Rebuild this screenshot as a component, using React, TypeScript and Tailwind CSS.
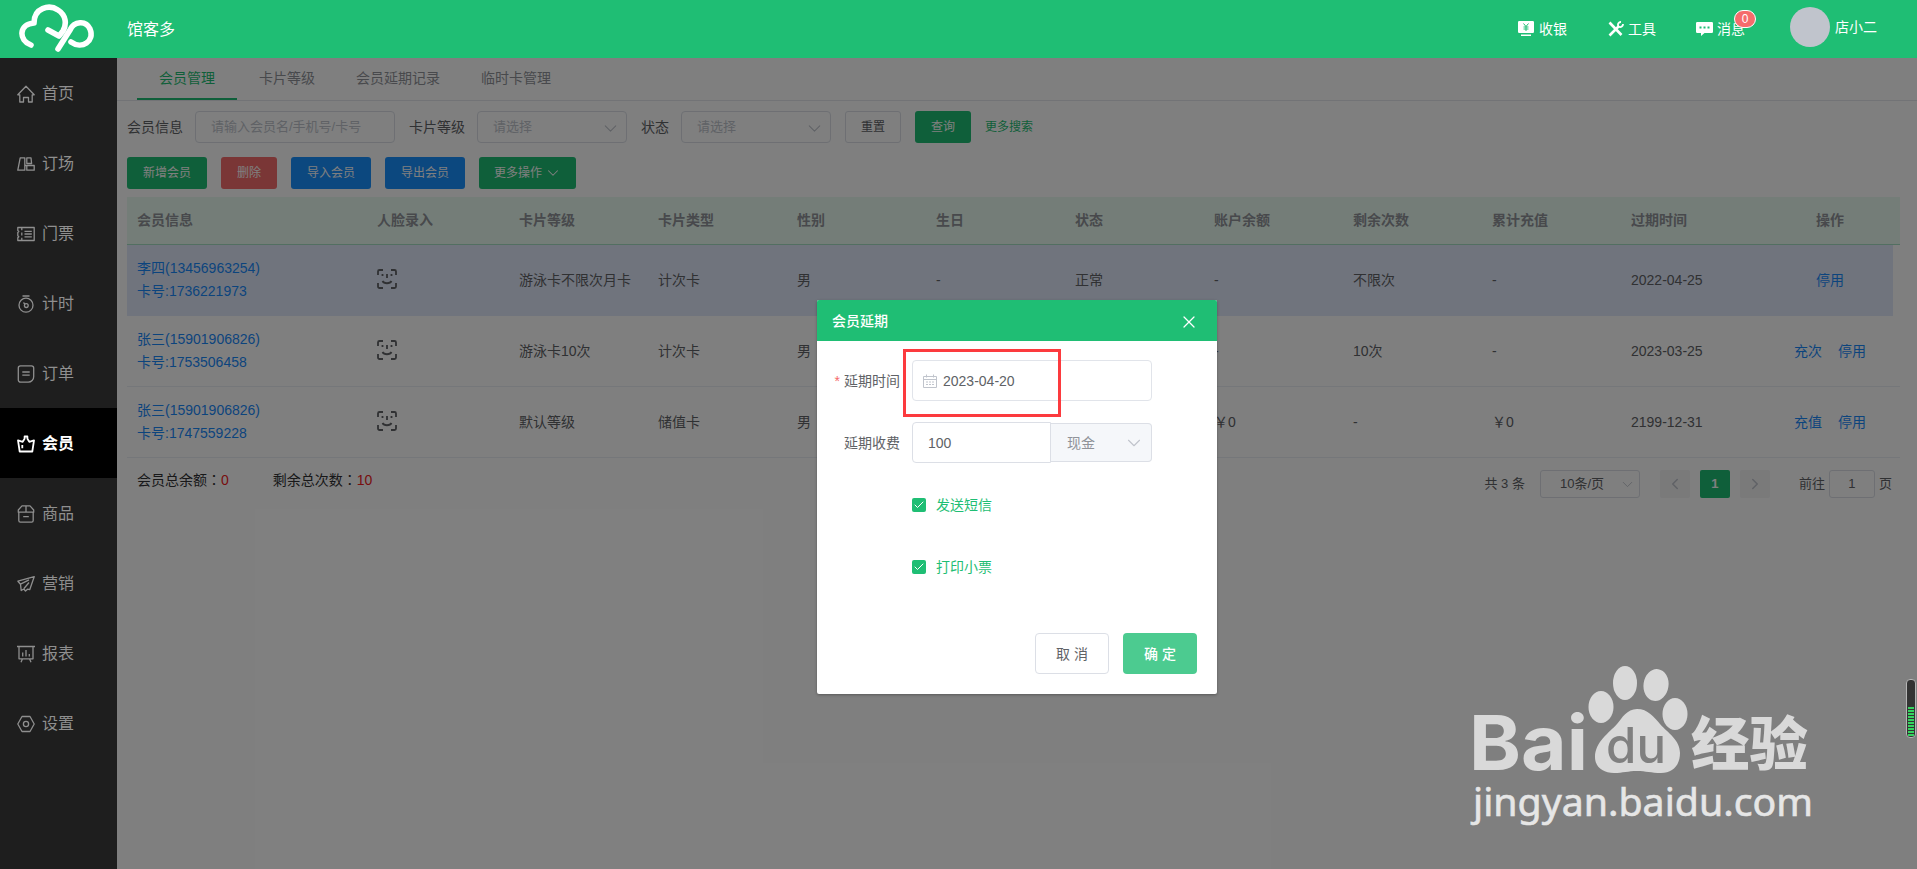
import React from 'react';
import { ChevronDown, ChevronLeft, ChevronRight, X, Check } from 'lucide-react';

interface MenuItem {
  label: string;
  icon: React.ReactNode;
  active?: boolean;
}

interface Member {
  name: string;
  card: string;
  level: string;
  type: string;
  gender: string;
  birthday: string;
  status: string;
  balance: string;
  times: string;
  recharge: string;
  expire: string;
  actions: string[];
}

const menu: MenuItem[] = [
  { label: '首页', icon: <path d="M2.8 9.8H.8L9 1.2l8.2 8.6h-2V17h-3.7v-4.5h-5V17H2.8z" /> },
  { label: '订场', icon: <path d="M3.2 2.8h4.6v12.4H.8zM9.8 2.8H14l.6 5.7H9.8zM9.8 10.5h7.4v4.7H9.8zM7.8 10.5h2" /> },
  { label: '门票', icon: <path d="M.8 2.5h16.4v13H.8v-2.7l1-1-1-1V7.5l1-1-1-1zM4.8 2.5v2.8M4.8 7.5v3M4.8 12.7v2.8M7.5 6.3h7.3M7.5 9h7.3M7.5 11.8h7.3" /> },
  {
    label: '计时',
    icon: (
      <>
        <circle cx="9" cy="10.2" r="7" />
        <circle cx="9.3" cy="10.6" r="1.9" />
        <path d="M5.5 1h7M6.5 7.5 8 9.2" />
      </>
    ),
  },
  { label: '订单', icon: <path d="M3.5.8h11A2.2 2.2 0 0 1 16.7 3v8.500a5.500 5.500 0 0 1-5.500 5.700H3.500A2.200 2.200 0 0 1 1.300 15V3A2.200 2.200 0 0 1 3.500.8zM5.300 7h7.400M5.300 10.200h7.400" /> },
  { label: '会员', active: true, icon: <path d="M1 5.300 5.700 6.800 7.600 3.800V1.500h2.800v2.300l1.900 3L17 5.300l-1.700 11.200H2.700zM5.300 10v3.300" /> },
  { label: '商品', icon: <path d="M5 .9h8L16.700 5v2.200H1.300V5zM1.800 7.200v8.300c0 1 .6 1.600 1.600 1.600h11.200c1 0 1.600-.6 1.600-1.600V7.200M9 .9v6.300M6.200 11.700h5.600" /> },
  { label: '营销', icon: <path d="M17.200 1.700.9 6.200l2.600 3 .7 6.300 2.600-1.500 1.700 2 2-1.800 2.200.5zM3.500 9.200l8.500-4.300M7 13.500l5-6" /> },
  { label: '报表', icon: <path d="M0 1.500h18M2 1.500v12.300h14V1.500M5.500 13.800 4 17.200M12.500 13.800l1.500 3.400M5.700 7.500v4M9 5V11.500M12.300 9v2.500" /> },
  {
    label: '设置',
    icon: (
      <>
        <path d="M5 1.500h8L17.200 9 13 16.500H5L.8 9z" />
        <circle cx="9" cy="9" r="2.600" />
      </>
    ),
  },
];

const tabs = ['会员管理', '卡片等级', '会员延期记录', '临时卡管理'];

const columns = ['会员信息', '人脸录入', '卡片等级', '卡片类型', '性别', '生日', '状态', '账户余额', '剩余次数', '累计充值', '过期时间'];

const members: Member[] = [
  { name: '李四(13456963254)', card: '卡号:1736221973', level: '游泳卡不限次月卡', type: '计次卡', gender: '男', birthday: '-', status: '正常', balance: '-', times: '不限次', recharge: '-', expire: '2022-04-25', actions: ['停用'] },
  { name: '张三(15901906826)', card: '卡号:1753506458', level: '游泳卡10次', type: '计次卡', gender: '男', birthday: '-', status: '正常', balance: '-', times: '10次', recharge: '-', expire: '2023-03-25', actions: ['充次', '停用'] },
  { name: '张三(15901906826)', card: '卡号:1747559228', level: '默认等级', type: '储值卡', gender: '男', birthday: '-', status: '正常', balance: '￥0', times: '-', recharge: '￥0', expire: '2199-12-31', actions: ['充值', '停用'] },
];

const GRID = 'grid grid-cols-[240px_142px_139px_139px_139px_139px_139px_139px_139px_139px_139px_140px]';

const FaceIcon = () => (
  <svg className="mb-[3px] h-[22px] w-[22px]" viewBox="0 0 22 22" fill="none" stroke="currentColor" strokeWidth="1.8">
    <path d="M2 7V3.500A1.500 1.500 0 0 1 3.500 2H7M15 2h3.500A1.500 1.500 0 0 1 20 3.500V7M20 15v3.500a1.500 1.500 0 0 1-1.500 1.500H15M7 20H3.500A1.500 1.500 0 0 1 2 18.500V15" />
    <path d="M6.500 6v2M11 6v4M15.500 6v2M6.500 13c1.500 3 7.500 3 9 0" />
  </svg>
);

const Header = () => (
  <header className="flex h-[58px] shrink-0 items-center bg-[#1fbe74] text-white">
    <svg className="ml-[18px] h-[50px] w-[78px]" viewBox="0 0 78 50" fill="none" stroke="currentColor" strokeWidth="5.6" strokeLinecap="round" strokeLinejoin="round">
      <path d="M13 41C0 36 1 20 16 19C16 4 31 0 40 6C48 11 49 20 45 27L41 32L30 26" />
      <path d="M40 45 52 26C56 17 68 16 72 25C77 37 64 46 53 38" />
    </svg>
    <div className="mt-[2px] ml-[31px] flex-1 text-[16px]">馆客多</div>
    <div className="flex items-center gap-[5px] text-[14px]">
      <svg className="h-4 w-4" viewBox="0 0 16 16">
        <path d="M1.200 0h13.600A1.200 1.200 0 0 1 16 1.200v9.600a1.200 1.200 0 0 1-1.200 1.200H1.200A1.200 1.200 0 0 1 0 10.800V1.200A1.200 1.200 0 0 1 1.200 0zM3 13.500h10v1.500H3z" fill="currentColor" />
        <path d="m5.500 2.500 2.500 3 2.500-3M5.500 6h5M5.500 8h5M8 5.500V10" stroke="#1fbe74" fill="none" />
      </svg>
      收银
    </div>
    <div className="ml-[41px] flex items-center gap-[4px] text-[14px]">
      <svg className="h-4 w-4" viewBox="0 0 16 16" fill="none" stroke="currentColor" strokeWidth="2.6">
        <path d="M1.500 1.500 13.500 14M1.500 14.500l9-9" />
        <path d="M10.500 5.500C9 3 11 .8 13 1M10.500 5.500C13 7 15.200 5 15 3" strokeWidth="1.8" />
      </svg>
      工具
    </div>
    <div className="relative ml-[40px] flex items-center gap-[4px] text-[14px]">
      <svg className="h-4 w-[17px]" viewBox="0 0 17 16" fill="currentColor">
        <path d="M1.200 1h14.600A1.200 1.200 0 0 1 17 2.200v8.600a1.200 1.200 0 0 1-1.200 1.200H8.500L5 15v-3H1.200A1.200 1.200 0 0 1 0 10.800V2.200A1.200 1.200 0 0 1 1.200 1z" />
        <path d="M3.500 5.500h2v2h-2zM7.500 5.500h2v2h-2zM11.500 5.500h2v2h-2z" fill="#1fbe74" />
      </svg>
      消息
      <span className="absolute -top-[9px] left-[38px] flex h-[18px] w-[22px] items-center justify-center rounded-full border border-white bg-[#f56c6c] text-[12px]">0</span>
    </div>
    <div className="mb-1 ml-[45px] h-10 w-10 rounded-full bg-[#c0c4cc]" />
    <div className="mr-[40px] mb-1 ml-[5px] text-[14px]">店小二</div>
  </header>
);

const Sidebar = () => (
  <nav className="w-[117px] shrink-0 bg-[#1e1e1e]">
    {menu.map((item) => (
      <div
        key={item.label}
        className={`flex h-[70px] items-center gap-[7px] pt-[1px] pl-[17px] text-[16px] ${item.active ? 'bg-black font-bold text-white' : 'text-[#8f8f8f]'}`}
      >
        <svg className="h-[18px] w-[18px]" viewBox="0 0 18 18" fill="none" stroke="currentColor" strokeWidth={item.active ? 1.8 : 1.3} strokeLinejoin="round">
          {item.icon}
        </svg>
        <span className="pt-[1px]">{item.label}</span>
      </div>
    ))}
  </nav>
);

const SelectBox = () => (
  <div className="flex h-8 w-[150px] items-center justify-between rounded border border-[#dcdfe6] pr-[5px] pl-[15px] text-[13px] text-[#c0c4cc]">
    请选择
    <ChevronDown size={21} strokeWidth={1.2} className="mt-[3px]" />
  </div>
);

const MemberTable = () => (
  <div className="ml-[10px] w-[1773px] text-[14px]">
    <div className={`${GRID} h-12 items-center border-b border-[#a5dfc2] bg-[#e9fbf1] font-bold text-[#909399]`}>
      {columns.map((column) => (
        <div key={column} className="pl-[10px]">{column}</div>
      ))}
      <div className="text-center">操作</div>
    </div>
    {members.map((member, index) => (
      <div
        key={member.card}
        className={`${GRID} h-[71px] items-center border-b text-[#606266] ${index === 0 ? 'w-[1766px] border-[#e0e9fb] bg-[#e0e9fb]' : 'border-[#ebeef5]'}`}
      >
        <div className="pl-[10px] leading-[23px] text-[#1989fa]">
          <div>{member.name}</div>
          <div>{member.card}</div>
        </div>
        <div className="pl-[9px]"><FaceIcon /></div>
        <div className="pl-[10px] whitespace-nowrap">{member.level}</div>
        <div className="pl-[10px]">{member.type}</div>
        <div className="pl-[10px]">{member.gender}</div>
        <div className="pl-[10px]">{member.birthday}</div>
        <div className="pl-[10px]">{member.status}</div>
        <div className="pl-[10px]">{member.balance}</div>
        <div className="pl-[10px]">{member.times}</div>
        <div className="pl-[10px]">{member.recharge}</div>
        <div className="pl-[10px]">{member.expire}</div>
        <div className="flex justify-center gap-4 text-[#1989fa]">
          {member.actions.map((action) => (
            <span key={action}>{action}</span>
          ))}
        </div>
      </div>
    ))}
  </div>
);

// The Traditional face centres the full-width colon
const Colon = () => <span className="mb-[4px] font-['Noto_Sans_CJK_TC',sans-serif] leading-none">：</span>;

const Checkbox = ({ label }: { label: string }) => (
  <div className="ml-[95px] flex h-[62px] items-center gap-[10px] text-[14px] text-[#1fbe74]">
    <span className="flex h-[14px] w-[14px] items-center justify-center rounded-[2px] bg-[#1fbe74]">
      <Check size={12} strokeWidth={2} className="text-white" />
    </span>
    <span className="pt-[1px]">{label}</span>
  </div>
);

const ExtendDialog = () => (
  <div className="absolute top-[300px] left-[817px] h-[394px] w-[400px] rounded-[2px] bg-white text-[14px] text-[#606266] shadow-[0_1px_3px_rgba(0,0,0,0.3)]">
    <div className="flex h-[41px] items-center justify-between rounded-t-[2px] bg-[#1fbe74] pt-[2px] pr-[18px] pl-[15px] font-medium text-white">
      会员延期
      <X size={20} strokeWidth={1.5} />
    </div>
    <div className="mt-[19px] flex items-center">
      <div className="w-[83px] pt-[2px] text-right">
        <span className="mr-1 text-[#f56c6c]">*</span>延期时间
      </div>
      <div className="ml-3 flex h-[41px] w-[240px] items-center gap-[6px] rounded border border-[#e1e4ea] pt-[1px] pl-[10px]">
        <svg className="h-[14px] w-[14px] text-[#c0c4cc]" viewBox="0 0 14 14" fill="none" stroke="currentColor">
          <path d="M.5 2.500h13v11H.5zM.5 5.500h13M3.500.5v3M10.500.5v3M3 8h2M6 8h2M9 8h2M3 10.500h2M6 10.500h2M9 10.500h2" />
        </svg>
        2023-04-20
      </div>
    </div>
    <div className="mt-[21px] flex items-center">
      <div className="w-[83px] pt-[2px] text-right">延期收费</div>
      <div className="ml-3 flex h-[41px] w-[139px] items-center rounded-l border border-[#dcdfe6] pt-[1px] pl-[15px]">100</div>
      <div className="flex h-[39px] w-[101px] items-center justify-between rounded-r border border-l-0 border-[#dcdfe6] bg-[#f5f7fa] pt-[1px] pr-[6px] pl-[16px] text-[#909399]">
        现金
        <ChevronDown size={22} strokeWidth={1.2} className="text-[#c0c4cc]" />
      </div>
    </div>
    <div className="mt-[11px]">
      <Checkbox label="发送短信" />
      <Checkbox label="打印小票" />
    </div>
    <div className="mt-[35px] flex justify-end gap-[14px] pr-[20px]">
      <button className="h-[41px] w-[74px] rounded border border-[#dcdfe6] pt-[1px]">取 消</button>
      <button className="h-[41px] w-[74px] rounded bg-[#4ccb90] pt-[1px] font-medium text-white">确 定</button>
    </div>
  </div>
);

const Watermark = () => (
  <div className="absolute top-[664px] left-[1470px] h-[166px] w-[350px] text-[#d9d9d9]">
    <svg className="h-full w-full" viewBox="0 0 350 166" fill="currentColor">
      <text x="-1" y="106" fontSize="76" fontFamily="Inter, sans-serif" fontWeight="700" textLength="119" lengthAdjust="spacingAndGlyphs">Bai</text>
      <ellipse cx="131" cy="43" rx="12.5" ry="16" />
      <ellipse cx="155" cy="19" rx="12" ry="17" />
      <ellipse cx="186" cy="21" rx="12.5" ry="16" transform="rotate(8 186 21)" />
      <ellipse cx="205" cy="50" rx="12.5" ry="16" />
      <path d="M167 45c-10 0-15 9-20 15-8 9-22 18-22 33 0 10 8 16 19 16 9 0 14-2 23-2s14 2 24 2c12 0 19-8 19-20 0-13-12-20-20-29-6-7-12-15-23-15z" />
      <text x="136" y="99" fontSize="49" fontFamily="Inter, sans-serif" fontWeight="500" fill="#808080" textLength="60" lengthAdjust="spacingAndGlyphs">du</text>
      <text x="221" y="101" fontSize="58" fontFamily="'Noto Sans CJK SC', sans-serif" fontWeight="900" textLength="117" lengthAdjust="spacingAndGlyphs">经验</text>
      <text x="3" y="152" fontSize="38" fontFamily="'Noto Sans', sans-serif" fill="#e6e6e6" stroke="#e6e6e6" strokeWidth="0.6" textLength="340" lengthAdjust="spacingAndGlyphs">jingyan.baidu.com</text>
    </svg>
  </div>
);

const VolumeMeter = () => (
  <div className="absolute top-[679px] left-[1906px] flex h-[59px] w-[10px] flex-col justify-end gap-px rounded-[4px] border border-[#b5b5b5] bg-[#333] p-px">
    {Array.from({ length: 10 }, (_, index) => (
      <div key={index} className="h-[2px] w-full bg-[#35d45f]" />
    ))}
  </div>
);

const App: React.FC = () => {
  return (
    <div className="relative flex h-[869px] w-[1917px] flex-col overflow-hidden bg-white font-['Liberation_Sans','Noto_Sans_CJK_SC',sans-serif]">
      <Header />
      <div className="flex flex-1">
        <Sidebar />
        <main className="relative flex-1">
          <div className="flex h-[43px] border-b border-[#e4e7ed] pl-[20px] text-[14px] text-[#909399]">
            {tabs.map((tab, index) => (
              <div
                key={tab}
                className={index === 0 ? 'flex w-[100px] items-center justify-center border-b-2 border-[#1fbe74] text-[#1fbe74]' : 'ml-[22px] flex items-center pr-[19px] pb-[2px]'}
              >
                {tab}
              </div>
            ))}
          </div>
          <div className="mt-[10px] ml-[10px] flex items-center text-[14px] text-[#606266]">
            <span>会员信息</span>
            <div className="mr-[14px] ml-[12px] flex h-8 w-[200px] items-center rounded border border-[#dcdfe6] pl-[15px] text-[13px] text-[#c0c4cc]">请输入会员名/手机号/卡号</div>
            <span className="mr-[12px]">卡片等级</span>
            <SelectBox />
            <span className="mr-[12px] ml-[14px]">状态</span>
            <SelectBox />
            <button className="ml-[14px] h-8 w-14 rounded-[3px] border border-[#dcdfe6] text-[12px]">重置</button>
            <button className="ml-[14px] h-8 w-14 rounded-[3px] bg-[#1fbe74] text-[12px] text-white">查询</button>
            <span className="ml-[14px] text-[12px] text-[#1fbe74]">更多搜索</span>
          </div>
          <div className="mt-[14px] mb-[8px] ml-[10px] flex gap-[14px] text-[12px] text-white">
            <button className="h-8 w-20 rounded-[3px] bg-[#1fbe74]">新增会员</button>
            <button className="h-8 w-14 rounded-[3px] bg-[#f56c6c]">删除</button>
            <button className="h-8 w-20 rounded-[3px] bg-[#1890ff]">导入会员</button>
            <button className="h-8 w-20 rounded-[3px] bg-[#1890ff]">导出会员</button>
            <button className="flex h-8 w-[97px] items-center gap-[2px] rounded-[3px] bg-[#1fbe74] pl-[15px]">
              更多操作 <ChevronDown size={18} strokeWidth={1.4} />
            </button>
          </div>
          <MemberTable />
          <div className="flex items-start text-[14px] text-[#303133]">
            <div className="mt-[12px] ml-[20px] flex h-[21px] items-center">会员总余额<Colon /><span className="text-[#f01c1c]">0</span></div>
            <div className="mt-[12px] ml-[44px] flex h-[21px] flex-1 items-center">剩余总次数<Colon /><span className="text-[#f01c1c]">10</span></div>
            <div className="mt-[12px] mr-[25px] flex h-7 items-center text-[13px] text-[#606266]">
              <span>共 3 条</span>
              <div className="ml-[15px] flex h-7 w-[100px] items-center justify-between rounded-[3px] border border-[#dcdfe6] pr-[3px] pl-[19px]">
                10条/页
                <ChevronDown size={17} strokeWidth={1.3} className="text-[#c0c4cc]" />
              </div>
              <span className="ml-[20px] flex h-7 w-[30px] items-center justify-center rounded-[2px] bg-[#f4f4f5] text-[#c0c4cc]"><ChevronLeft size={18} /></span>
              <span className="ml-[10px] flex h-7 w-[30px] items-center justify-center rounded-[2px] bg-[#1fbe74] font-bold text-white">1</span>
              <span className="ml-[10px] flex h-7 w-[30px] items-center justify-center rounded-[2px] bg-[#f4f4f5] text-[#c0c4cc]"><ChevronRight size={18} /></span>
              <span className="ml-[29px]">前往</span>
              <span className="mx-[4px] flex h-7 w-[46px] items-center justify-center rounded-[3px] border border-[#dcdfe6]">1</span>
              <span>页</span>
            </div>
          </div>
          <div className="absolute inset-0 bg-black/50" />
        </main>
      </div>
      <ExtendDialog />
      <div className="absolute top-[349px] left-[903px] h-[68px] w-[158px] border-3 border-[#fc3a3e]" />
      <Watermark />
      <VolumeMeter />
    </div>
  );
};

export default App;
